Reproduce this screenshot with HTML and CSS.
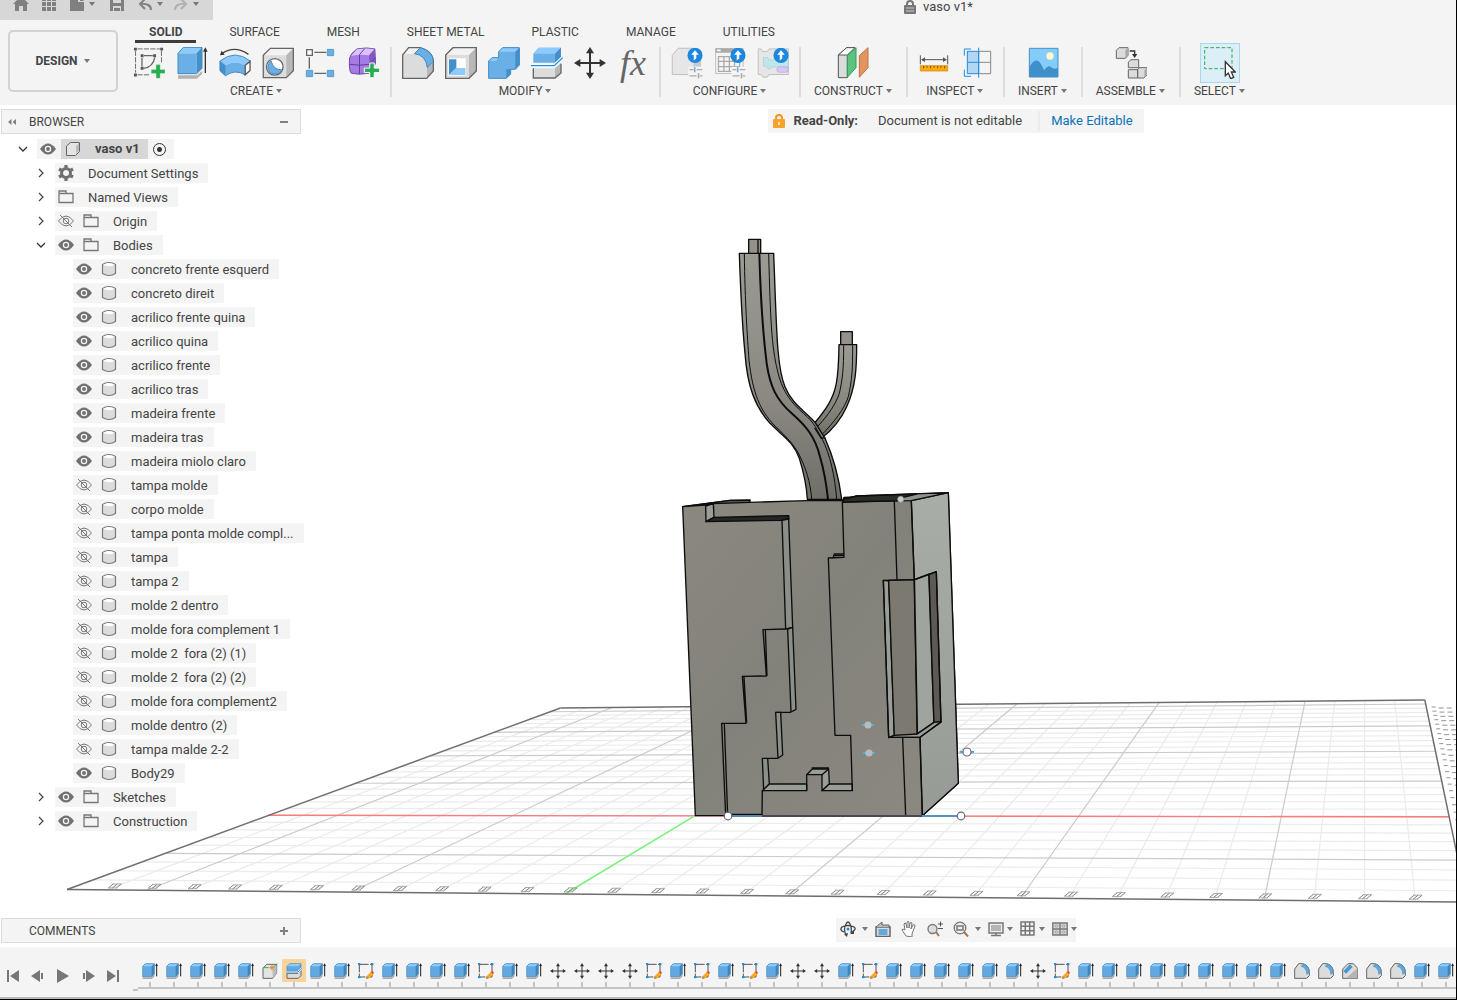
FILE: index.html
```html
<!DOCTYPE html>
<html lang="en">
<head>
<meta charset="utf-8">
<title>vaso v1*</title>
<link rel="stylesheet" href="styles.css">
</head>
<body>

<svg class="sprite" aria-hidden="true">
  <!-- ribbon icons -->
  <symbol id="i-sketch" viewBox="0 0 100 96">
    <path d="M14 4h70M8 10v68M89 10v36M14 85h40" fill="none" stroke="#666" stroke-width="3" stroke-dasharray="16 4"/><path d="M34 25h28M28 32v26M68 31q-5 29-35 34" fill="none" stroke="#666" stroke-width="4"/>
    <path d="M3 0h9v9H3zM85 0h9v9h-9zM3 81h9v9H3zM24 21h9v9h-9zM63 21h9v9h-9zM24 60h9v9h-9z" fill="#555"/>
    <path d="M72 53h13v15h15v13H85v15H72V81H57V68h15z" fill="#27ae52" stroke="#f4f4f4"/>
  </symbol>
  <symbol id="i-extrude" viewBox="0 0 96 96">
    <path d="M6 19 22 1h56L62 19z" fill="#8ecbfc"/><path d="M6 19h56v61H6z" fill="#6aafe6"/><path d="M62 19 78 1v63L62 80z" fill="#4490c8"/>
    <path d="M6 19 22 1h56v63L62 80H6z" fill="none" stroke="#3e8ac2" stroke-width="3"/>
    <path d="M6 85h58l14-14v10L62 95H6z" fill="#b2b2b2"/>
    <path d="M88 78V8" stroke="#333" stroke-width="4"/><path d="m81 14 7-13 7 13z" fill="#333"/>
  </symbol>
  <symbol id="i-revolve" viewBox="0 0 100 96">
    <path d="M92 21Q50-8 10 18" fill="none" stroke="#444" stroke-width="4"/><path d="m3 24 5-14 10 12z" fill="#333"/>
    <path d="M3 42Q50 4 98 42L82 55Q50 38 20 55z" fill="#8ecbfc"/>
    <path d="M3 42 20 55Q50 38 82 55v30Q50 66 20 88L3 72z" fill="#6aafe6"/>
    <path d="M3 42 20 55v33L3 72z" fill="#4490c8"/>
    <path d="M3 42Q50 4 98 42M3 42v30l17 16Q50 66 82 85" fill="none" stroke="#3e8ac2" stroke-width="3"/>
    <path d="m82 55 15-12v28L82 85z" fill="#fff" stroke="#555" stroke-width="4"/>
  </symbol>
  <symbol id="i-hole" viewBox="0 0 100 96">
    <path d="M4 24 26 2h72v70L76 94H4z" fill="#dcdcdc"/><path d="M4 24 26 2h72L76 24z" fill="#f2f2f2"/><path d="M76 24 98 2v70L76 94z" fill="#b8b8b8"/>
    <path d="M4 24 26 2h72v70L76 94H4z" fill="none" stroke="#666" stroke-width="4"/>
    <circle cx="40" cy="60" r="26" fill="#fff" stroke="#666" stroke-width="4"/>
    <path d="M29 42q6 28 32 27a22 22 0 1 1-32-27z" fill="#6aafe6" stroke="#3e8ac2" stroke-width="3"/>
  </symbol>
  <symbol id="i-pattern" viewBox="0 0 96 96">
    <path d="M28 16h36M28 79h36M13 31v34" stroke="#666" stroke-width="4"/>
    <path d="M5 8h17v17H5z" fill="#fff" stroke="#666" stroke-width="4"/>
    <path d="M67 7h19v19H67zM4 70h19v19H4zM67 70h19v19H67z" fill="#6aafe6" stroke="#3e8ac2" stroke-width="2"/>
  </symbol>
  <symbol id="i-form" viewBox="0 0 100 96">
    <path d="M5 32Q8 18 28 4q30-6 56 0l2 44q-4 18-20 32-34 6-56 0Q2 70 5 32z" fill="#a77be6" stroke="#6d48a6" stroke-width="3"/>
    <path d="M10 26 28 5q30-4 54 0L66 24q-30-4-56 2z" fill="#dcc2fb"/>
    <path d="M66 24 83 6l2 42-18 26z" fill="#8458c2"/>
    <path d="M5 52q30 6 61 0l20-20M36 22v60M36 22 52 3" fill="none" stroke="#5f3c98" stroke-width="3"/>
    <path d="M68 48h14v16h17v14H82v16H68V78H51V64h17z" fill="#27ae52" stroke="#fff" stroke-width="3"/>
  </symbol>
  <symbol id="i-fillet" viewBox="0 0 96 96">
    <path d="M2 94V24L20 2h35q38 12 39 42v28L74 94z" fill="#dcdcdc"/>
    <path d="M2 24 20 2h35L37 20q-20 0-35 4z" fill="#f2f2f2"/>
    <path d="m75 64 19-20v28L75 94z" fill="#b8b8b8"/>
    <path d="M2 94V24L20 2h35q38 12 39 42v28L74 94z" fill="none" stroke="#666" stroke-width="4"/>
    <path d="M37 20 55 2q37 10 39 40L76 62Q72 24 37 20z" fill="#6aafe6" stroke="#3e8ac2" stroke-width="3"/>
  </symbol>
  <symbol id="i-shell" viewBox="0 0 96 96">
    <path d="M2 24 24 2h70v70L72 94H2z" fill="#dcdcdc"/><path d="M2 24 24 2h70L72 24z" fill="#f2f2f2"/><path d="M72 24 94 2v70L72 94z" fill="#b8b8b8"/>
    <path d="M2 24 24 2h70v70L72 94H2z" fill="none" stroke="#666" stroke-width="4"/>
    <path d="M10 34h52v52H10z" fill="#fff"/><path d="M12 37h22v26L12 84z" fill="#4490c8"/><path d="M34 63h27v21H12z" fill="#8ecbfc"/>
  </symbol>
  <symbol id="i-combine" viewBox="0 0 96 96">
    <path d="M2 42 12 32h20V14L44 2h50v52L82 67H68v14L55 94H2z" fill="#6aafe6"/>
    <path d="M32 14 44 2h50L82 14zM2 42l10-10h20l-8 10z" fill="#8ecbfc"/>
    <path d="M82 14 94 2v52L82 67zM55 67h13v14L55 94z" fill="#4490c8"/>
    <path d="M2 42 12 32h20V14L44 2h50v52L82 67H68v14L55 94H2z" fill="none" stroke="#3e8ac2" stroke-width="3"/>
  </symbol>
  <symbol id="i-split" viewBox="0 0 96 96">
    <path d="M7 20 23 2h67v30L72 47H7z" fill="#6aafe6"/><path d="M7 20 23 2h67L72 20z" fill="#8ecbfc"/><path d="M72 20 90 2v30L72 47z" fill="#4490c8"/>
    <path d="M0 56h70l25-25" fill="none" stroke="#fff" stroke-width="9"/><path d="M0 56h70l25-24" fill="none" stroke="#1f8ee0" stroke-width="4"/>
    <path d="M7 64h65l18-16v30L72 93H7z" fill="#dcdcdc"/><path d="m72 64 18-16v30L72 93z" fill="#b8b8b8"/>
    <path d="M7 64v29h65l18-15V50" fill="none" stroke="#666" stroke-width="4"/>
  </symbol>
  <symbol id="i-move" viewBox="0 0 96 96">
    <path d="M48 12v72M12 48h72" stroke="#333" stroke-width="6"/>
    <path d="m48 0 12 19H36zM48 96l12-19H36zM0 48l19-12v24zM96 48 77 36v24z" fill="#333"/>
  </symbol>
  <symbol id="i-up" viewBox="0 0 48 48"><circle cx="24" cy="24" r="24" fill="#1b87e0"/><path d="m24 8 12 14h-8v12l-8 6V22h-8z" fill="#fff"/></symbol>
  <symbol id="i-conf-part" viewBox="0 0 100 96">
    <path d="M4 24 22 2h50v82H4z" fill="#e6e6e6" stroke="#bdbdbd" stroke-width="3"/><path d="M72 26 94 6v54H72z" fill="#c9c9c9"/>
    <path d="M54 60h46v36H54z" fill="#f4f4f4"/>
    <path d="M58 69h12m10 0h18M58 88h22m10 0h8" stroke="#aaa" stroke-width="4"/><path d="M74 61v16" stroke="#6aafe6" stroke-width="5"/><path d="M86 80v16" stroke="#aaa" stroke-width="5"/>
    <use href="#i-up" x="51" y="0" width="48" height="48"/>
  </symbol>
  <symbol id="i-conf-table" viewBox="0 0 100 96">
    <path d="M5 3h86v78H5z" fill="#f4f4f4" stroke="#bdbdbd" stroke-width="3"/><path d="M5 2h86v14H5z" fill="#aaa"/><path d="M9 6h12v5H9z" fill="#fff"/>
    <path d="M14 28h66v46H14zM31 28v46M48 28v46M64 28v46M14 43h66M14 59h66" fill="none" stroke="#aaa" stroke-width="4"/>
    <path d="M54 60h46v36H54z" fill="#f4f4f4"/>
    <path d="M58 69h12m10 0h18M58 88h22m10 0h8" stroke="#aaa" stroke-width="4"/><path d="M74 61v16" stroke="#6aafe6" stroke-width="5"/><path d="M86 80v16" stroke="#aaa" stroke-width="5"/>
    <use href="#i-up" x="51" y="0" width="48" height="48"/>
  </symbol>
  <symbol id="i-conf-rule" viewBox="0 0 100 96">
    <path d="M4 4h8l6 8h14l6-8h60v80H38l-6 8H18l-6-8H4z" fill="#e6e6e6" stroke="#bdbdbd" stroke-width="3"/>
    <path d="M20 31h14l5 8h12l5-8h42v29H48l-6 6h-8l-6-8h-8z" fill="#bfe6ea" stroke="#9fd0d6" stroke-width="2"/>
    <rect x="62" y="60" width="36" height="17" rx="8" fill="#d9c6f5" stroke="#b79fe0" stroke-width="2"/>
    <use href="#i-up" x="51" y="0" width="48" height="48"/>
  </symbol>
  <symbol id="i-plane" viewBox="0 0 96 96">
    <path d="M4 24 29 2h25L31 24v68H4z" fill="#dcdcdc" stroke="#555" stroke-width="3"/><path d="M4 24 29 2h25L31 24z" fill="#fff" stroke="#555" stroke-width="3"/>
    <path d="M31 26 57 2v60L31 91z" fill="#5cc47f" stroke="#2f9e57" stroke-width="3"/>
    <path d="M67 26 93 2v60L67 91z" fill="#e39561" stroke="#bf7245" stroke-width="3"/>
  </symbol>
  <symbol id="i-measure" viewBox="0 0 96 96">
    <path d="M7 25v27M89 25v27M12 38h72" stroke="#555" stroke-width="3"/><path d="m9 38 12-7v14zM87 38l-12-7v14z" fill="#555"/>
    <path d="M7 56h82v16H7z" fill="#ffab0f" stroke="#c98200" stroke-width="2"/><path d="M17 57v7M27 57v5M38 57v7M48 57v5M59 57v7M69 57v5M80 57v7" stroke="#7a5200" stroke-width="3"/>
  </symbol>
  <symbol id="i-section" viewBox="0 0 96 96">
    <path d="M19 13h34v67H19z" fill="#b3d7f2"/><path d="M54 13h35v67H54M54 46h35" fill="none" stroke="#888" stroke-width="3"/>
    <path d="M19 13h34v67H19zM19 46h34M53 2v90M30 6H10v20M10 68v20h20" fill="none" stroke="#1f8ee0" stroke-width="3"/>
  </symbol>
  <symbol id="i-image" viewBox="0 0 96 96">
    <path d="M7 4h86v86H7z" fill="#86ccfb" stroke="#4490c8" stroke-width="3"/><path d="M7 60q24-44 44 10 14-20 24-8 8 6 18 0v28H7z" fill="#3f8fca"/><circle cx="69" cy="27" r="11" fill="#fff6c9"/>
  </symbol>
  <symbol id="i-joint" viewBox="0 0 96 96">
    <g fill="#dcdcdc" stroke="#666" stroke-width="3"><path d="M4 10 12 2h27v23l-8 9H4z"/><path d="m40 45 8-7h23v24H40zM40 68h28v25H40zM68 68l5-6h23v22l-9 9H68z"/></g>
    <path d="M31 10v24l8-9V2zM88 70v22l8-8V62z" fill="#aaa"/>
    <path d="M44 12h15v12" fill="none" stroke="#333" stroke-width="4"/><path d="M51 21h16l-8 12z" fill="#333"/>
  </symbol>
  <symbol id="i-select" viewBox="0 0 96 96">
    <path d="M2 2h82v63H2z" fill="none" stroke="#27ae52" stroke-width="3" stroke-dasharray="11 6"/>
    <path d="M64 44v42l9-8 7 17 9-4-7-16h12z" fill="#fff" stroke="#333" stroke-width="4"/>
  </symbol>

  <!-- quick access -->
  <symbol id="q-home" viewBox="0 0 16 16"><path d="M8 0 16 8h-2v7h-4v-5H6v5H2V8H0z" fill="#808080"/></symbol>
  <symbol id="q-grid" viewBox="0 0 16 16"><path d="M1 1h4v4H1zM6 1h4v4H6zM11 1h4v4h-4zM1 6h4v4H1zM6 6h4v4H6zM11 6h4v4h-4zM1 11h4v4H1zM6 11h4v4H6zM11 11h4v4h-4z" fill="#808080"/></symbol>
  <symbol id="q-file" viewBox="0 0 16 16"><path d="M1 1h8v5h6v9H1zM11 1l4 4h-4z" fill="#808080"/></symbol>
  <symbol id="q-save" viewBox="0 0 16 16"><path d="M1 1h14v14H1z" fill="#808080"/><path d="M4 1h8v6H4zM4 10h8v5H4z" fill="#d7d7d7"/><path d="M5 12h6v3H5z" fill="#808080"/></symbol>
  <symbol id="q-undo" viewBox="0 0 16 16"><path d="M14 14Q14 7 3 8M8 3 3 8l5 5" fill="none" stroke="#808080" stroke-width="2"/></symbol>
  <symbol id="q-redo" viewBox="0 0 16 16"><path d="M2 14Q2 7 13 8M8 3l5 5-5 5" fill="none" stroke="#b0b0b0" stroke-width="2"/></symbol>
  <symbol id="q-lock" viewBox="0 0 12 15"><path d="M3 6V4a3 3 0 0 1 6 0v2" fill="none" stroke="#777" stroke-width="2"/><rect y="5" width="12" height="9" rx="1" fill="#777"/><path d="M2 8h8M2 11h8" stroke="#ccc"/></symbol>
  <symbol id="q-caret" viewBox="0 0 8 8"><path d="M1 2h6L4 6z" fill="#777"/></symbol>

  <!-- browser tree -->
  <symbol id="t-down" viewBox="0 0 16 16"><path d="m4 6 4 4 4-4" fill="none" stroke="#333" stroke-width="1.3"/></symbol>
  <symbol id="t-right" viewBox="0 0 16 16"><path d="m6 4 4 4-4 4" fill="none" stroke="#444" stroke-width="1.2"/></symbol>
  <symbol id="t-eye" viewBox="0 0 16 16"><path d="M0 8q8-11 16 0-8 11-16 0z" fill="#707070"/><circle cx="8" cy="8" r="2.6" fill="none" stroke="#f4f4f4" stroke-width="1.3"/></symbol>
  <symbol id="t-hid" viewBox="0 0 16 16"><path d="M.5 8q7.500-10 15 0-7.500 10-15 0zM2 2l12 12" fill="none" stroke="#777"/><circle cx="8" cy="8" r="2.8" fill="none" stroke="#777"/></symbol>
  <symbol id="t-body" viewBox="0 0 16 16"><path d="M1.500 3.500v9q6.500 4 13 0v-9q-6.500-4-13 0z" fill="#dcdcdc" stroke="#777" stroke-width="1.200"/><path d="M2 3.700q6-3.500 12 0-6 3-12 0z" fill="#fff"/></symbol>
  <symbol id="t-folder" viewBox="0 0 16 16"><path d="M1 2v11.500h14v-9H8V2zM1 4.500h7" fill="none" stroke="#777" stroke-width="1.300"/></symbol>
  <symbol id="t-part" viewBox="0 0 16 16"><path d="m1.500 5 4-3.500h9v9l-4 4h-9z" fill="#e4e4e4" stroke="#666"/><path d="M11 5l3-3v8l-3 3z" fill="#bbb"/></symbol>
  <symbol id="t-gear" viewBox="0 0 16 16"><circle cx="8" cy="8" r="4.500" fill="none" stroke="#707070" stroke-width="3"/><path d="M8 0v3M8 13v3M1 4l3 1.700M12 10.300 15 12M1 12l3-1.700M12 5.700 15 4" stroke="#707070" stroke-width="3.200"/></symbol>

  <!-- timeline -->
  <symbol id="f-extrude" viewBox="0 0 48 48"><path d="M2 10 10 2h27v30l-8 9H2z" fill="#62a9e2"/><path d="M2 10 10 2h27l-8 8z" fill="#8ecbfc"/><path d="m29 10 8-8v30l-8 9z" fill="#3f86bd"/><path d="M2 10 10 2h27v30l-8 9H2z" fill="none" stroke="#3e86bb" stroke-width="2"/><path d="M2 43h26l10-9v6l-9 8H2z" fill="#aaa"/><path d="M44 40V7" stroke="#222" stroke-width="3"/><path d="m39 9 5-8 4 8z" fill="#222"/></symbol>
  <symbol id="f-sketch" viewBox="0 0 48 48"><path d="M4 4h38v38H4z" fill="none" stroke="#555" stroke-width="3" stroke-dasharray="28 4"/><path d="M0 0h7v7H0zM39 0h7v7h-7zM0 39h7v7H0z" fill="#1f8ee0"/><path d="m26 40 12-13 8 7-12 12-9 2z" fill="#ffa816"/><path d="m38 27 5-4 5 6-3 5z" fill="#e84a4a"/><path d="m26 40-2 7 8-1z" fill="#888"/></symbol>
  <symbol id="f-import" viewBox="0 0 48 48"><path d="M3 16 14 4h30v26L32 46H3z" fill="#e4e4e4" stroke="#666" stroke-width="3"/><path d="m32 20 12-14v24L32 46z" fill="#bbb"/><path d="M2 14h18M32 14 46 2" stroke="#27ae52" stroke-width="3"/><path d="M30 6v16M22 14h16M25 9l10 10M35 9 25 19" stroke="#e88a3c" stroke-width="3"/></symbol>
  <symbol id="f-split" viewBox="0 0 48 48"><path d="M3 10 11 2h34v12l-8 9H3z" fill="#62a9e2" stroke="#3e86bb" stroke-width="2"/><path d="M4 10 11 3h33l-8 7z" fill="#8ecbfc"/><path d="M3 31h33l9-9v16l-8 8H3z" fill="#dcdcdc" stroke="#666" stroke-width="3"/><path d="M0 27h36L48 16" fill="none" stroke="#fff" stroke-width="6"/><path d="M0 27h36L48 16" fill="none" stroke="#1f8ee0" stroke-width="3"/></symbol>
  <symbol id="f-fillet" viewBox="0 0 48 48"><path d="M2 46V18L14 2h12q20 4 20 28v8l-8 8z" fill="#dcdcdc" stroke="#666" stroke-width="3"/><path d="m22 10 6-7q17 6 18 24l-7 7Q38 14 22 10z" fill="#62a9e2" stroke="#3e86bb" stroke-width="2"/></symbol>
  <symbol id="f-chamfer" viewBox="0 0 48 48"><path d="M2 46V18L18 2h16l13 14v30z" fill="#dcdcdc" stroke="#666" stroke-width="3"/><path d="M12 46 46 16v30z" fill="#b5b5b5"/><path d="M4 24 24 4l8 8-20 20z" fill="#4b97d2"/></symbol>

  <!-- view bar -->
  <symbol id="n-orbit" viewBox="0 0 16 16"><path d="M6 14Q3 8 6 3q2-4 4 0 2 4 1 9M12 11q5-3 2-5-6-3-12 0-3 3 2 5" fill="none" stroke="#444" stroke-width="1.300"/><path d="m4 13 4-1-1 4zM10 13l4-4v4z" fill="#444"/><circle cx="8" cy="8" r="1.500" fill="#1f8ee0"/></symbol>
  <symbol id="n-look" viewBox="0 0 16 16"><path d="M1 6h14v9.500H1z" fill="#ddd" stroke="#666" stroke-width="1.500"/><path d="M3.500 8h9v6h-9z" fill="#62a9e2"/><path d="m1 6 6-5v3h7v2" fill="#bbb" stroke="#666"/></symbol>
  <symbol id="n-pan" viewBox="0 0 16 16"><path d="M5 15 1 9q0-2 3 0L3 3q1-2 2 0l1 4V1q1-1 2 0v6l1-5q1-1 2 0l-1 6 2-4q2-1 2 1l-3 8v3z" fill="#fff" stroke="#777"/></symbol>
  <symbol id="n-zoom" viewBox="0 0 16 16"><circle cx="5.500" cy="8" r="4.500" fill="#ddd" stroke="#777" stroke-width="1.300"/><path d="m9 11 3 4" stroke="#a9744a" stroke-width="2"/><path d="M11 3h5M13.500.5v5M11 7.500h5" stroke="#555"/></symbol>
  <symbol id="n-window" viewBox="0 0 16 16"><circle cx="7" cy="7" r="5.800" fill="#eee" stroke="#777" stroke-width="1.300"/><path d="M4 5h6v4H4z" fill="none" stroke="#777" stroke-width="1.500"/><path d="m11 11 4 4.500" stroke="#a9744a" stroke-width="2"/></symbol>
  <symbol id="n-display" viewBox="0 0 16 16"><path d="M1 2h14v10H1z" fill="#eee" stroke="#777" stroke-width="1.500"/><path d="M3 4h10v6H3z" fill="#b5b5b5"/><path d="M8 12v2M3 14.500h10" stroke="#777" stroke-width="1.500"/></symbol>
  <symbol id="n-grid" viewBox="0 0 16 16"><path d="M1 1h13v13H1zM5.300 1v13M9.700 1v13M1 5.300h13M1 9.700h13" fill="none" stroke="#777" stroke-width="1.500"/></symbol>
  <symbol id="n-views" viewBox="0 0 16 16"><path d="M.8 2h14.400v12H.8zM8 2v12M1 8h14" fill="#ddd" stroke="#777" stroke-width="1.400"/><path d="M3 4h3v2H3zM10 4h3v2h-3zM3 10h3v2H3zM10 10h3v2h-3z" fill="none" stroke="#aaa"/></symbol>
</svg>

<header class="header">
  <div class="topbar">
    <nav class="quick" aria-label="Quick access">
      <button aria-label="Home"><svg class="ic16"><use href="#q-home"/></svg></button>
      <button aria-label="Data panel"><svg class="ic16"><use href="#q-grid"/></svg></button>
      <button aria-label="File"><svg class="ic16"><use href="#q-file"/></svg><svg class="ic8"><use href="#q-caret"/></svg></button>
      <button aria-label="Save"><svg class="ic16"><use href="#q-save"/></svg></button>
      <button aria-label="Undo"><svg class="ic16"><use href="#q-undo"/></svg><svg class="ic8"><use href="#q-caret"/></svg></button>
      <button aria-label="Redo"><svg class="ic16"><use href="#q-redo"/></svg><svg class="ic8"><use href="#q-caret"/></svg></button>
    </nav>
    <div class="doc-title"><svg class="lock"><use href="#q-lock"/></svg>vaso v1*</div>
  </div>
  <div class="header-main">
    <button class="workspace">DESIGN <svg class="ic8"><use href="#q-caret"/></svg></button>
    <div class="toolbar">
      <nav class="tabs" aria-label="Toolbar tabs">
        <button class="tab tab-active">SOLID</button><button class="tab">SURFACE</button><button class="tab">MESH</button><button class="tab">SHEET METAL</button><button class="tab">PLASTIC</button><button class="tab">MANAGE</button><button class="tab">UTILITIES</button>
      </nav>
      <div class="ribbon">
        <section class="group">
          <div class="tools">
            <button aria-label="Create sketch"><svg><use href="#i-sketch"/></svg></button>
            <button aria-label="Extrude"><svg><use href="#i-extrude"/></svg></button>
            <button aria-label="Revolve"><svg><use href="#i-revolve"/></svg></button>
            <button aria-label="Hole"><svg><use href="#i-hole"/></svg></button>
            <button aria-label="Pattern"><svg><use href="#i-pattern"/></svg></button>
            <button aria-label="Create form"><svg><use href="#i-form"/></svg></button>
          </div>
          <button class="group-menu">CREATE<svg class="ic8"><use href="#q-caret"/></svg></button>
        </section>
        <section class="group">
          <div class="tools">
            <button aria-label="Fillet"><svg><use href="#i-fillet"/></svg></button>
            <button aria-label="Shell"><svg><use href="#i-shell"/></svg></button>
            <button aria-label="Combine"><svg><use href="#i-combine"/></svg></button>
            <button aria-label="Split body"><svg><use href="#i-split"/></svg></button>
            <button aria-label="Move"><svg><use href="#i-move"/></svg></button>
            <button class="fx" aria-label="Change parameters">fx</button>
          </div>
          <button class="group-menu">MODIFY<svg class="ic8"><use href="#q-caret"/></svg></button>
        </section>
        <section class="group">
          <div class="tools">
            <button aria-label="Configure part"><svg><use href="#i-conf-part"/></svg></button>
            <button aria-label="Configuration table"><svg><use href="#i-conf-table"/></svg></button>
            <button aria-label="Configuration rules"><svg><use href="#i-conf-rule"/></svg></button>
          </div>
          <button class="group-menu">CONFIGURE<svg class="ic8"><use href="#q-caret"/></svg></button>
        </section>
        <section class="group">
          <div class="tools"><button aria-label="Offset plane"><svg><use href="#i-plane"/></svg></button></div>
          <button class="group-menu">CONSTRUCT<svg class="ic8"><use href="#q-caret"/></svg></button>
        </section>
        <section class="group">
          <div class="tools">
            <button aria-label="Measure"><svg><use href="#i-measure"/></svg></button>
            <button aria-label="Section analysis"><svg><use href="#i-section"/></svg></button>
          </div>
          <button class="group-menu">INSPECT<svg class="ic8"><use href="#q-caret"/></svg></button>
        </section>
        <section class="group">
          <div class="tools"><button aria-label="Insert image"><svg><use href="#i-image"/></svg></button></div>
          <button class="group-menu">INSERT<svg class="ic8"><use href="#q-caret"/></svg></button>
        </section>
        <section class="group">
          <div class="tools"><button aria-label="Joint"><svg><use href="#i-joint"/></svg></button></div>
          <button class="group-menu">ASSEMBLE<svg class="ic8"><use href="#q-caret"/></svg></button>
        </section>
        <section class="group">
          <div class="tools"><button class="tool-active" aria-label="Select"><svg><use href="#i-select"/></svg></button></div>
          <button class="group-menu">SELECT<svg class="ic8"><use href="#q-caret"/></svg></button>
        </section>
      </div>
    </div>
  </div>
</header>

<main class="canvas">
  <svg class="scene" viewBox="0 105 1456 842" preserveAspectRatio="xMidYMid slice" role="img" aria-label="Vase model on the ground grid">
    <defs>
      <linearGradient id="front" x1="0" y1="0" x2="1" y2="1"><stop offset="0" stop-color="#8b887f"/><stop offset=".45" stop-color="#83827a"/><stop offset="1" stop-color="#8c8981"/></linearGradient>
      <linearGradient id="side" x1="0" y1="0" x2="0" y2="1"><stop offset="0" stop-color="#a9ada7"/><stop offset="1" stop-color="#979b95"/></linearGradient>
      <linearGradient id="wood" x1="0" y1="0" x2="0" y2="1"><stop offset="0" stop-color="#9b9a93"/><stop offset=".6" stop-color="#8a8881"/><stop offset="1" stop-color="#6f6e67"/></linearGradient>
    </defs>
    <g id="grid"></g>
    <!-- trunk and branch -->
    <g transform="translate(670 220) scale(.33333)" stroke="#0c0c0c" stroke-width="4" fill="none" stroke-linejoin="round">
      <path d="M236 58h36v44h-36z" fill="#93918a"/><path d="M264 60v40"/>
      <path d="M512 335h35v42h-35z" fill="#93918a"/>
      <path d="M507 374h53c0 66-2 126-30 186-20 45-50 75-76 95l-20-46c26-32 55-66 65-119 7-38 7-70 8-116z" fill="url(#wood)"/>
      <path d="M521 376c0 70-3 100-13 144-10 30-30 62-70 105M548 376c0 74-2 104-13 154-12 36-40 74-83 118" stroke-width="3"/>
      <path d="M208 100c4 120 7 200 17 300 7 100 30 160 75 210 40 40 70 55 88 105 14 45 22 85 24 123h103c-10-78-25-128-50-183l-29-47c-36-38-71-58-91-108-25-60-25-170-34-400z" fill="url(#wood)"/>
      <path d="M223 100c2 150 9 250 14 320 11 100 33 150 75 195 43 40 66 65 83 105 20 45 27 80 30 118M296 100c5 200 9 280 26 350 13 60 38 95 78 130 16 14 28 26 36 40l20 36c24 46 39 114 44 182" stroke-width="3"/>
      <path d="M268 100c4 150 12 250 22 330 10 70 30 110 75 150 45 40 70 70 85 130 12 40 20 90 24 128" stroke-width="6"/>
      <path d="m434 624 20 31 12-3" />
    </g>
    <!-- vase block -->
    <g transform="translate(670 480) scale(.33333)" stroke="#0c0c0c" stroke-width="4" fill="none" stroke-linejoin="round">
      <path d="m38 80 142-19h60l-2 6 170-5h110l4-10 313-14 30 872-108 97H76z" fill="url(#front)"/>
      <path d="m724 62 111-24 30 872-108 97-7-235-17-473z" fill="url(#side)"/>
      <path d="m520 58 40-10 275-10-111 24-204 4z" fill="#8f938d"/>
      <path d="m520 58 40-10 180-6-40 10-10 10-170 4z" fill="#2b2d28"/>
      <path d="m38 80 142-19 60-1-2 7-108 4-23 4z" fill="#555750"/>
      <path d="M107 78l23-7 2 41-24 13z" fill="#9a9e98"/>
      <path d="m132 112 224-5 1 9-21 5-228 4z" fill="#262724"/>
      <path d="m336 121 20-4 12 325-21 5z" fill="#8b8f89"/>
      <path d="m353 447 15-5 10 246-15 8z" fill="#8b8f89"/>
      <path d="m347 447-68 2 10 139-72 1 11 141h-73l12 277M286 449l5 139M222 590l8 138M163 732l10 275"/>
      <path d="M317 697h15l6 128-14 10z" fill="#8b8f89"/><path d="m363 697-46 0M332 697h31"/>
      <path d="M323 835h-46l4 97 17-20-5-77" fill="#8b8f89"/>
      <path d="M298 912h112v20H277z" fill="#9a9e98"/><path d="m277 932-1 75M165 1003h111"/>
      <path d="m410 884 17-17h49l2 45-22 20v-48z" fill="#9a9e98"/><path d="m456 884 20-17M410 884v48M425 864h52"/>
      <path d="M478 912h69v20h-91z" fill="#9a9e98"/>
      <path d="m547 932-5-166h-47L475 234l47-2-5-168M490 232l3-10h28M494 227h26"/>
      <path d="m673 64 8 235M724 62l9 237"/>
      <path d="m640 301 16 2 17 464-17 6z" fill="#9a9e98"/>
      <path d="m656 301 77-2 9 466-69 2z" fill="#7c7971"/>
      <path d="m733 299 44-16 15 444-50 35z" fill="#a0a49e" stroke-width="5"/>
      <path d="m777 283 22-8 14 450-21 2z" fill="#5c5a54"/>
      <path d="m742 762 50-35 21-2-63 47h-94l17-6z" fill="#9a9e98"/>
      <path d="m640 301 93-2 66-24 14 452-63 45h-94z"/>
      <path d="m698 773 9 234M750 772l7 235"/>
      <circle cx="692" cy="58" r="9" fill="#ccc" stroke="#999" stroke-width="2"/>
    </g>
    <!-- construction handles -->
    <path d="M728 816h34" stroke="#5a86b0" stroke-width="2"/><path d="M762 816h160" stroke="#4d4458" stroke-width="2"/><path d="M922 816h39" stroke="#5a8fc4" stroke-width="2"/>
    <g stroke="#4aaeea" stroke-width="2"><path d="M862 725h12M863 753h12M960 752h14"/></g>
    <g fill="#fff" stroke="#667" stroke-width="1.200"><circle cx="728" cy="816" r="3.800"/><circle cx="961" cy="816" r="3.800"/><circle cx="967" cy="752" r="4"/></g>
    <g fill="#b4bcc0"><circle cx="868" cy="725" r="3.600"/><circle cx="869" cy="753" r="3.600"/></g>
  </svg>

  <aside class="browser">
    <h2 class="panel-head"><span class="collapse" aria-hidden="true"><svg viewBox="0 0 10 8"><path d="M4.500 1v6L1 4zM9 1v6L5.500 4z" fill="#808080"/></svg></span>BROWSER<button class="panel-btn" aria-label="Minimize"><svg viewBox="0 0 8 8"><path d="M0 3h8v2H0z" fill="#808080"/></svg></button></h2>
    <ul class="tree">
      <li class="row lv0"><button aria-label="Collapse"><svg class="ic16"><use href="#t-down"/></svg></button><div class="chip root"><svg class="ic16"><use href="#t-eye"/></svg><span class="selected"><svg class="ic16"><use href="#t-part"/></svg><b>vaso v1</b></span><input type="radio" name="active" aria-label="Activate vaso v1" checked></div></li>
      <li class="row lv1"><button aria-label="Expand"><svg class="ic16"><use href="#t-right"/></svg></button><div class="chip"><svg class="ic16"><use href="#t-gear"/></svg><span>Document Settings</span></div></li>
      <li class="row lv1"><button aria-label="Expand"><svg class="ic16"><use href="#t-right"/></svg></button><div class="chip"><svg class="ic16"><use href="#t-folder"/></svg><span>Named Views</span></div></li>
      <li class="row lv1"><button aria-label="Expand"><svg class="ic16"><use href="#t-right"/></svg></button><div class="chip"><svg class="ic16"><use href="#t-hid"/></svg><svg class="ic16"><use href="#t-folder"/></svg><span>Origin</span></div></li>
      <li class="row lv1"><button aria-label="Collapse"><svg class="ic16"><use href="#t-down"/></svg></button><div class="chip"><svg class="ic16"><use href="#t-eye"/></svg><svg class="ic16"><use href="#t-folder"/></svg><span>Bodies</span></div></li>
      <li class="row lv2"><div class="chip"><svg class="ic16"><use href="#t-eye"/></svg><svg class="ic16"><use href="#t-body"/></svg><span>concreto frente esquerd</span></div></li>
      <li class="row lv2"><div class="chip"><svg class="ic16"><use href="#t-eye"/></svg><svg class="ic16"><use href="#t-body"/></svg><span>concreto direit</span></div></li>
      <li class="row lv2"><div class="chip"><svg class="ic16"><use href="#t-eye"/></svg><svg class="ic16"><use href="#t-body"/></svg><span>acrilico frente quina</span></div></li>
      <li class="row lv2"><div class="chip"><svg class="ic16"><use href="#t-eye"/></svg><svg class="ic16"><use href="#t-body"/></svg><span>acrilico quina</span></div></li>
      <li class="row lv2"><div class="chip"><svg class="ic16"><use href="#t-eye"/></svg><svg class="ic16"><use href="#t-body"/></svg><span>acrilico frente</span></div></li>
      <li class="row lv2"><div class="chip"><svg class="ic16"><use href="#t-eye"/></svg><svg class="ic16"><use href="#t-body"/></svg><span>acrilico tras</span></div></li>
      <li class="row lv2"><div class="chip"><svg class="ic16"><use href="#t-eye"/></svg><svg class="ic16"><use href="#t-body"/></svg><span>madeira frente</span></div></li>
      <li class="row lv2"><div class="chip"><svg class="ic16"><use href="#t-eye"/></svg><svg class="ic16"><use href="#t-body"/></svg><span>madeira tras</span></div></li>
      <li class="row lv2"><div class="chip"><svg class="ic16"><use href="#t-eye"/></svg><svg class="ic16"><use href="#t-body"/></svg><span>madeira miolo claro</span></div></li>
      <li class="row lv2"><div class="chip"><svg class="ic16"><use href="#t-hid"/></svg><svg class="ic16"><use href="#t-body"/></svg><span>tampa molde</span></div></li>
      <li class="row lv2"><div class="chip"><svg class="ic16"><use href="#t-hid"/></svg><svg class="ic16"><use href="#t-body"/></svg><span>corpo molde</span></div></li>
      <li class="row lv2"><div class="chip"><svg class="ic16"><use href="#t-hid"/></svg><svg class="ic16"><use href="#t-body"/></svg><span>tampa ponta molde compl...</span></div></li>
      <li class="row lv2"><div class="chip"><svg class="ic16"><use href="#t-hid"/></svg><svg class="ic16"><use href="#t-body"/></svg><span>tampa</span></div></li>
      <li class="row lv2"><div class="chip"><svg class="ic16"><use href="#t-hid"/></svg><svg class="ic16"><use href="#t-body"/></svg><span>tampa 2</span></div></li>
      <li class="row lv2"><div class="chip"><svg class="ic16"><use href="#t-hid"/></svg><svg class="ic16"><use href="#t-body"/></svg><span>molde 2 dentro</span></div></li>
      <li class="row lv2"><div class="chip"><svg class="ic16"><use href="#t-hid"/></svg><svg class="ic16"><use href="#t-body"/></svg><span>molde fora complement 1</span></div></li>
      <li class="row lv2"><div class="chip"><svg class="ic16"><use href="#t-hid"/></svg><svg class="ic16"><use href="#t-body"/></svg><span>molde 2&nbsp; fora (2) (1)</span></div></li>
      <li class="row lv2"><div class="chip"><svg class="ic16"><use href="#t-hid"/></svg><svg class="ic16"><use href="#t-body"/></svg><span>molde 2&nbsp; fora (2) (2)</span></div></li>
      <li class="row lv2"><div class="chip"><svg class="ic16"><use href="#t-hid"/></svg><svg class="ic16"><use href="#t-body"/></svg><span>molde fora complement2</span></div></li>
      <li class="row lv2"><div class="chip"><svg class="ic16"><use href="#t-hid"/></svg><svg class="ic16"><use href="#t-body"/></svg><span>molde dentro (2)</span></div></li>
      <li class="row lv2"><div class="chip"><svg class="ic16"><use href="#t-hid"/></svg><svg class="ic16"><use href="#t-body"/></svg><span>tampa malde 2-2</span></div></li>
      <li class="row lv2"><div class="chip"><svg class="ic16"><use href="#t-eye"/></svg><svg class="ic16"><use href="#t-body"/></svg><span>Body29</span></div></li>
      <li class="row lv1"><button aria-label="Expand"><svg class="ic16"><use href="#t-right"/></svg></button><div class="chip"><svg class="ic16"><use href="#t-eye"/></svg><svg class="ic16"><use href="#t-folder"/></svg><span>Sketches</span></div></li>
      <li class="row lv1"><button aria-label="Expand"><svg class="ic16"><use href="#t-right"/></svg></button><div class="chip"><svg class="ic16"><use href="#t-eye"/></svg><svg class="ic16"><use href="#t-folder"/></svg><span>Construction</span></div></li>
    </ul>
  </aside>

  <div class="notice">
    <svg class="notice-lock" viewBox="0 0 12 14"><path d="M3 6V4a3 3 0 0 1 6 0v2" fill="none" stroke="#f7941d" stroke-width="2"/><rect y="5" width="12" height="9" rx="1" fill="#f9a22b"/><path d="M6 8v3" stroke="#fff" stroke-width="1.500"/></svg>
    <b>Read-Only:</b><span class="notice-text">Document is not editable</span><a href="#edit">Make Editable</a>
  </div>

  <h2 class="panel-head comments">COMMENTS<button class="panel-btn" aria-label="Add comment"><svg viewBox="0 0 8 8"><path d="M3 0h2v3h3v2H5v3H3V5H0V3h3z" fill="#808080"/></svg></button></h2>

  <div class="viewbar">
    <button aria-label="Orbit"><svg class="ic16"><use href="#n-orbit"/></svg><svg class="ic8"><use href="#q-caret"/></svg></button>
    <button aria-label="Look at"><svg class="ic16"><use href="#n-look"/></svg></button>
    <button aria-label="Pan"><svg class="ic16"><use href="#n-pan"/></svg></button>
    <button aria-label="Zoom"><svg class="ic16"><use href="#n-zoom"/></svg></button>
    <button aria-label="Zoom window"><svg class="ic16"><use href="#n-window"/></svg><svg class="ic8"><use href="#q-caret"/></svg></button>
    <button class="tight" aria-label="Display settings"><svg class="ic16"><use href="#n-display"/></svg><svg class="ic8"><use href="#q-caret"/></svg></button>
    <button class="tight" aria-label="Grid and snaps"><svg class="ic16"><use href="#n-grid"/></svg><svg class="ic8"><use href="#q-caret"/></svg></button>
    <button class="tight" aria-label="Viewports"><svg class="ic16"><use href="#n-views"/></svg><svg class="ic8"><use href="#q-caret"/></svg></button>
  </div>
</main>

<footer class="timeline">
  <div class="playback">
    <button aria-label="To start"><svg viewBox="0 0 14 14"><path d="M1 1h2v12H1zM13 1v12L4 7z" fill="#777"/></svg></button>
    <button aria-label="Step back"><svg viewBox="0 0 14 14"><path d="M9 1v12L0 7zM10 4h2v6h-2z" fill="#777"/></svg></button>
    <button aria-label="Play"><svg viewBox="0 0 14 14"><path d="M1 0v14l12-7z" fill="#777"/></svg></button>
    <button aria-label="Step forward"><svg viewBox="0 0 14 14"><path d="M5 1v12l9-6zM2 4h2v6H2z" fill="#777"/></svg></button>
    <button aria-label="To end"><svg viewBox="0 0 14 14"><path d="M11 1h2v12h-2zM1 1v12l9-6z" fill="#777"/></svg></button>
  </div>
  <ol class="features" id="features"></ol>
</footer>

<script src="app.js"></script>
</body>
</html>
```
FILE: styles.css
```css
* { box-sizing: border-box; }
body {
  margin: 0;
  min-height: 100vh;
  display: flex;
  flex-direction: column;
  background: #fff;
  border-right: 1px solid #000;
  border-bottom: 1px solid #000;
  font: 13px/20px Roboto, "Liberation Sans", sans-serif;
  color: #444;
}
button {
  display: flex;
  align-items: center;
  padding: 0;
  border: 0;
  background: none;
  font: inherit;
  color: inherit;
}
svg { display: block; flex: none; }
.sprite { position: absolute; width: 0; height: 0; }
.ic8 { width: 8px; height: 8px; }
.ic16 { width: 16px; height: 16px; }

/* header */
.header { background: #f4f4f4; height: 105px; }
.topbar { display: flex; height: 20px; overflow: hidden; }
.quick {
  display: flex;
  align-items: flex-start;
  gap: 12px;
  width: 213px;
  padding-left: 13px;
  background: #d7d7d7;
}
.quick button { margin-top: -4px; }
.quick button:nth-child(4) { margin-left: 4px; }
.quick .ic8 { margin-left: 3px; margin-right: -3px; }
.doc-title {
  flex: 1;
  display: flex;
  align-items: flex-start;
  justify-content: center;
  gap: 7px;
  padding-left: 208px;
  font-size: 13px;
  line-height: 14px;
}
.lock { width: 12px; height: 15px; }
.header-main { display: flex; }
.workspace {
  width: 110px;
  height: 62px;
  margin: 10px 5px 0 8px;
  justify-content: center;
  gap: 5px;
  border: 2px solid #d2d2d2;
  border-radius: 5px;
  font-size: 12px;
  font-weight: 700;
}
.tabs { display: flex; gap: 19px; height: 27px; padding-left: 12px; }
.tab {
  height: 23px;
  padding: 3px 14px 0;
  border-bottom: 3px solid transparent;
  font-size: 12px;
}
.tab-active { border-color: #3c3c3c; font-weight: 700; }
.ribbon { display: flex; }
.group {
  display: flex;
  flex-direction: column;
  align-items: center;
  height: 50px;
  border-right: 2px solid #dcdcdc;
}
.group:last-child { border: 0; }
.tools { display: flex; gap: 11px; padding: 0 10px; }
.tools svg, .fx { width: 32px; height: 32px; }
.tool-active { margin: -4px; padding: 3px; border: 1px solid #a8d8ee; background: #dceef7; }
.fx { justify-content: center; font: italic 36px/32px "Liberation Serif", serif; color: #666; }
.group-menu { flex: none; gap: 2px; height: 24px; padding: 0 13px; font-size: 12px; }

/* viewport */
.canvas {
  position: relative;
  flex: 1;
  display: grid;
  grid-template-columns: 456px 1fr;
  grid-template-rows: auto 1fr auto;
  padding: 4px 0;
  overflow: hidden;
}
.scene { position: absolute; inset: 0; width: 100%; height: 100%; }
.browser, .notice, .comments, .viewbar { position: relative; }
.panel-head {
  display: flex;
  align-items: center;
  width: 300px;
  height: 25px;
  margin: 0 0 0 1px;
  padding: 0 12px 0 27px;
  border: 1px solid #dcdcdc;
  background: #f4f4f4;
  font-size: 12px;
  font-weight: 400;
}
.panel-btn { margin-left: auto; }
.panel-btn svg { width: 8px; height: 8px; }
.collapse { width: 22px; margin-left: -22px; }
.collapse svg { width: 10px; height: 8px; }
.browser { grid-row: 1 / 3; }
.comments { grid-column: 1; }

.tree { margin: 5px 0 0; padding: 0; list-style: none; }
.row { display: flex; gap: 6px; margin-bottom: 4px; }
.lv0 { padding-left: 15px; }
.lv1 { padding-left: 33px; }
.lv2 { padding-left: 73px; }
.chip {
  display: flex;
  align-items: center;
  gap: 9px;
  height: 20px;
  padding: 0 10px 0 3px;
  background: #f4f4f4;
  white-space: nowrap;
}
.chip span { padding: 2px 0 0 5px; }
.root { gap: 5px; padding-right: 8px; }
.root .selected {
  display: flex;
  align-items: center;
  gap: 14px;
  padding: 0 8px 0 4px;
  background: #d7d7d7;
}
.root input {
  appearance: none;
  width: 13px;
  height: 13px;
  margin: 0;
  border: 1px solid #333;
  border-radius: 50%;
  background: radial-gradient(#333 0 2px, transparent 3px);
}

.notice {
  justify-self: center;
  display: flex;
  align-items: center;
  height: 24px;
  padding-left: 5px;
  background: #f4f4f4;
}
.notice-lock { width: 12px; height: 14px; margin-right: 8px; }
.notice-text { padding: 0 16px 0 20px; border-right: 2px solid #ebebeb; }
.notice a { padding: 0 11px; color: #0c72b8; text-decoration: none; }

.viewbar {
  grid-column: 2;
  justify-self: center;
  display: flex;
  align-items: center;
  gap: 10px;
  height: 24px;
  padding: 0 2px 2px 4px;
  background: #f4f4f4;
}
.viewbar .ic8 { margin-left: 5px; margin-right: -4px; }
.viewbar .tight .ic8 { margin-left: 2px; }

/* timeline */
.timeline {
  display: flex;
  height: 52px;
  background: #f4f4f4;
  border-bottom: 2px solid #b8b8b8;
  overflow: hidden;
}
.playback { display: flex; gap: 11px; padding: 22px 14px 0 6px; align-items: flex-start; }
.playback svg { width: 14px; height: 14px; }
.features { display: flex; margin: 0; padding: 0 0 0 4px; list-style: none; }
.features::before {
  content: "";
  width: 5px;
  height: 42px;
  margin-left: -5px;
  border-bottom: 2px dashed #c4c4c4;
}
.features li {
  flex: none;
  display: flex;
  flex-direction: column;
  align-items: center;
  width: 24px;
  height: 42px;
  padding-top: 12px;
  border-bottom: 2px solid #c4c4c4;
}
.features li::after { content: ""; width: 2px; height: 5px; background: #c4c4c4; }
.features button { width: 24px; height: 24px; justify-content: center; }
.features svg { width: 16px; height: 16px; }
.features .current { background: #f8d39b; border-radius: 1px; }
```
FILE: app.js
```js
const NS = "http://www.w3.org/2000/svg";

// Ground grid: 31 x 30 cells projected to the viewport.
const COLS = 31, ROWS = 30;
function project(i, j) {
  const w = 1 - 0.004055 * i + 0.02045 * j;
  return [(67 + 39.21 * i + 27.91 * j) / w, (889.5 - 3.254 * i + 8.426 * j) / w];
}
const grid = document.getElementById("grid");
function line(a, b, color, width) {
  const el = document.createElementNS(NS, "path");
  el.setAttribute("d", `M${a.join(" ")}L${b.join(" ")}`);
  el.setAttribute("stroke", color);
  el.setAttribute("stroke-width", width);
  grid.append(el);
}
for (const major of [false, true]) {
  const color = major ? "#cbcbcb" : "#ebebeb";
  for (let i = 1; i < COLS; i++) {
    if ((i % 5 === 2) === major && i !== 12) line(project(i, 0), project(i, ROWS), color, 1.2);
  }
  for (let j = 1; j < ROWS; j++) {
    if ((j % 5 === 4) === major) line(project(0, j), project(COLS, j), color, 1.2);
  }
}
line(project(12, 9), project(12, ROWS), "#cbcbcb", 1.2);
line(project(0, 9), project(COLS, 9), "#ff7a7a", 1.4);
line(project(12, 0), project(12, 9), "#7df07d", 1.6);
const corners = [project(0, 0), project(0, ROWS), project(COLS, ROWS), project(COLS, 0)];
corners.forEach((p, n) => line(p, corners[(n + 1) % 4], "#6e6e6e", 1.5));

// Ruler marks along the near edge and the right edge.
for (let i = 1; i < COLS; i++) {
  const [x, y] = project(i, 0.3);
  for (let k = -1; k < 2; k++) {
    line([x + k * 4 - 2, y + 1], [x + k * 4 + 3, y - 3], "#777", 0.9);
  }
  line([x - 6, y + 1], [x + 3, y + 1], "#999", 0.8);
  line([x - 2, y - 3], [x + 7, y - 3], "#999", 0.8);
}
for (let j = 0; j < ROWS; j++) {
  const [x, y] = project(COLS, j);
  line([x + 6, y + 3], [x + 10, y + 3], "#888", 0.9);
  line([x + 13, y + 4], [x + 18, y + 4], "#888", 0.9);
  line([x + 21, y + 4], [x + 26, y + 4], "#888", 0.9);
}

// Timeline: e extrude, s sketch, m move, f fillet, c chamfer, i import, p split
const kinds = {
  e: ["f-extrude", "Extrude"], s: ["f-sketch", "Sketch"], m: ["i-move", "Move"],
  f: ["f-fillet", "Fillet"], c: ["f-chamfer", "Chamfer"], i: ["f-import", "Base feature"],
  p: ["f-split", "Split body"],
};
const history = "eeeeeipeeseeeeseemmmmsesesemmeseeeeeemseeeeeeeeeffcffee";
document.getElementById("features").innerHTML = [...history].map((k) => {
  const [icon, label] = kinds[k];
  const cls = k === "p" ? ' class="current"' : "";
  return `<li><button${cls} aria-label="${label}"><svg><use href="#${icon}"/></svg></button></li>`;
}).join("");
```
